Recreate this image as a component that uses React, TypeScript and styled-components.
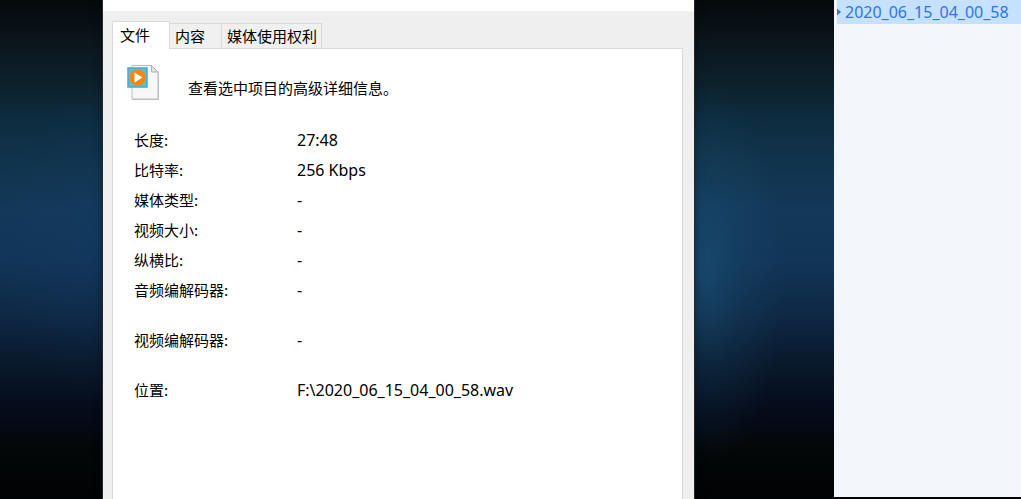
import React, { useState } from "react";
import styled, { createGlobalStyle } from "styled-components";

const GlobalStyle = createGlobalStyle`
  * { box-sizing: border-box; }
  body {
    margin: 0;
    background: #020406;
    color: #000;
    font: 15px/20px "Noto Sans CJK SC", sans-serif;
  }
  button { font: inherit; color: inherit; }
`;

const Desktop = styled.div`
  display: grid;
  grid-template-columns: 103fr 591fr 140fr 187fr;
  min-height: 100vh;
  background:
    radial-gradient(80px 190px at 69% 275px, rgba(28, 90, 128, 0.5), rgba(28, 90, 128, 0.18) 50%, transparent),
    radial-gradient(90px 150px at 9% 240px, rgba(20, 62, 108, 0.25), transparent),
    linear-gradient(
      #04090b 0px,
      #0b151a 40px,
      #0d202a 80px,
      #0d2c3f 120px,
      #11344d 165px,
      #133859 210px,
      #113557 260px,
      #0f2947 310px,
      #091a2d 360px,
      #050b1a 410px,
      #030708 450px,
      #010203 499px
    );
`;

const Dialog = styled.main`
  grid-column: 2;
  display: flex;
  flex-direction: column;
  border-top: 11px solid #fff;
  padding: 10px 11px 0 9px;
  background: #efefef;
  box-shadow: 0 0 0 1px #25292c, 0 0 8px rgba(0, 0, 0, 0.5);
`;

const TabList = styled.div`
  display: flex;
  align-items: flex-end;
`;

const Tab = styled.button<{ $active: boolean }>`
  height: ${(p) => (p.$active ? 28 : 25)}px;
  margin-bottom: ${(p) => (p.$active ? -1 : 0)}px;
  padding: ${(p) => (p.$active ? "0 19px 2px 7px" : "0 4px 0 5px")};
  border: 1px solid #d9d9d9;
  border-bottom: 0;
  border-left-width: ${(p) => (p.$active ? 1 : 0)}px;
  background: ${(p) => (p.$active ? "#fff" : "#f0f0f0")};
  z-index: ${(p) => (p.$active ? 1 : 0)};
  white-space: nowrap;

  &:nth-child(2) { padding-right: 16px; }
`;

const Panel = styled.section`
  flex: 1;
  padding: 15px 21px 24px;
  border: 1px solid #d9d9d9;
  border-bottom: 0;
  background: #fff;
`;

const Intro = styled.header`
  display: flex;
  align-items: center;
  gap: 27px;
  margin-left: -7px;

  p { margin: 10px 0 0; }
  svg { flex: none; }
`;

const Details = styled.dl`
  margin: 28px 0 0;
`;

const Detail = styled.div<{ $tall?: boolean }>`
  display: grid;
  grid-template-columns: 163px 1fr;
  height: ${(p) => (p.$tall ? 50 : 30)}px;

  dt { white-space: nowrap; }
  dd {
    margin: 0;
    font-family: "Noto Sans", "Noto Sans CJK SC", sans-serif;
    font-size: 16px;
  }
`;

const FileList = styled.aside`
  grid-column: 4;
  margin-bottom: 2px;
  padding-left: 3px;
  background: #f3f7fc;
`;

const FileItem = styled.button`
  display: flex;
  align-items: center;
  gap: 4px;
  width: 100%;
  height: 24px;
  padding: 0;
  border: 0;
  background: #c5e1fd;
  color: #2a76ea;
  font-family: "Noto Sans", sans-serif;
  font-size: 16px;
  white-space: nowrap;

  svg { flex: none; }
`;

function MediaFileIcon() {
  return (
    <svg width="34" height="38" viewBox="0 0 34 38" aria-hidden="true">
      <path d="M5 2H25L32 9V36H5Z" fill="#c2c2c2" />
      <path d="M5 1.5H24.5L31 8V35H5Z" fill="#f7f7f7" stroke="#bcbcbc" />
      <path d="M24.5 1.5V8H31Z" fill="#e4e4e4" stroke="#b0b0b0" />
      <rect x="1" y="4" width="19" height="19" fill="#65c1ad" stroke="#43a5f2" strokeWidth="1.5" />
      <circle cx="10.5" cy="13.5" r="8" fill="#f58412" />
      <path d="M7.5 8.5V18.5L15.5 13.5Z" fill="#fff" />
    </svg>
  );
}

const tabs = ["文件", "内容", "媒体使用权利"];

const details = [
  { label: "长度:", value: "27:48" },
  { label: "比特率:", value: "256 Kbps" },
  { label: "媒体类型:", value: "-" },
  { label: "视频大小:", value: "-" },
  { label: "纵横比:", value: "-" },
  { label: "音频编解码器:", value: "-", tall: true },
  { label: "视频编解码器:", value: "-", tall: true },
  { label: "位置:", value: "F:\\2020_06_15_04_00_58.wav" },
];

export default function App() {
  const [active, setActive] = useState(0);
  return (
    <>
      <GlobalStyle />
      <Desktop>
        <Dialog>
          <TabList role="tablist">
            {tabs.map((name, i) => (
              <Tab
                key={name}
                role="tab"
                aria-selected={i === active}
                $active={i === active}
                onClick={() => setActive(i)}
              >
                {name}
              </Tab>
            ))}
          </TabList>
          <Panel role="tabpanel">
            <Intro>
              <MediaFileIcon />
              <p>查看选中项目的高级详细信息。</p>
            </Intro>
            <Details>
              {details.map((d) => (
                <Detail key={d.label} $tall={d.tall}>
                  <dt>{d.label}</dt>
                  <dd>{d.value}</dd>
                </Detail>
              ))}
            </Details>
          </Panel>
        </Dialog>
        <FileList>
          <FileItem>
            <svg width="4" height="8" viewBox="0 0 4 8" aria-hidden="true">
              <path d="M0 0.5L4 4L0 7.5Z" fill="#2a76ea" />
            </svg>
            2020_06_15_04_00_58
          </FileItem>
        </FileList>
      </Desktop>
    </>
  );
}
